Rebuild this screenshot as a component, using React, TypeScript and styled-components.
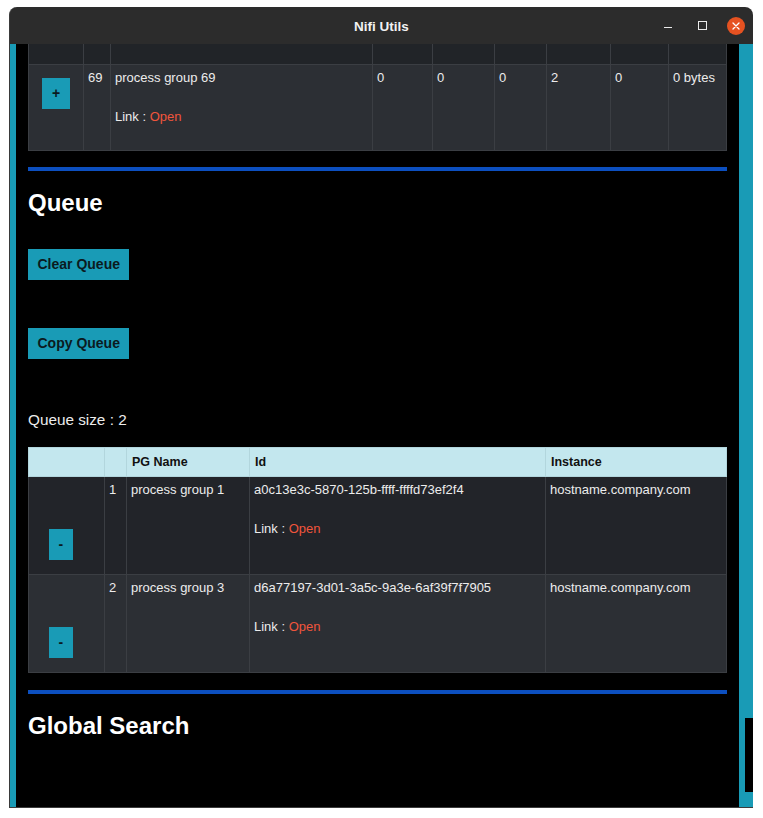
import React from 'react'
import styled, { createGlobalStyle } from 'styled-components'

const teal = '#199bb6'
const textColor = '#ececec'
const border = '#3b3e43'

const GlobalStyle = createGlobalStyle`
  body {
    margin: 0;
    background: #ffffff;
    font-family: 'Liberation Sans', Arial, sans-serif;
  }
`

const Window = styled.div`
  margin: 7px 0 0 9px;
  width: 744px;
  height: 801px;
  border-radius: 8px 8px 0 0;
  overflow: hidden;
  background: #2c2c2c;
  display: flex;
  flex-direction: column;
  box-sizing: border-box;
  border-left: 1px solid #3a3a3a;
  border-bottom: 1px solid #3c3c3c;
`

const TitleBar = styled.div`
  height: 37px;
  flex: none;
  display: grid;
  grid-template-columns: 1fr auto 1fr;
  align-items: center;
  color: #f2f2f2;
  font-weight: bold;
  font-size: 13.5px;
`

const Title = styled.div`
  grid-column: 2;
  padding-top: 1px;
`

const Controls = styled.div`
  justify-self: end;
  display: flex;
  align-items: center;
  gap: 16px;
  padding-right: 8px;
`

const CtrlButton = styled.div`
  width: 18px;
  height: 18px;
  display: flex;
  align-items: center;
  justify-content: center;
`

const MinLine = styled.span`
  width: 8px;
  height: 1.5px;
  background: #eaeaea;
  margin-top: 4px;
`

const MaxBox = styled.span`
  width: 7px;
  height: 7px;
  border: 1px solid #eaeaea;
`

const CloseCircle = styled(CtrlButton)`
  border-radius: 50%;
  background: #e65221;
`

const Body = styled.div`
  flex: 1;
  display: flex;
  min-height: 0;
`

const SideBorder = styled.div`
  width: 6px;
  flex: none;
  background: ${teal};
`

const Main = styled.div`
  flex: 1;
  background: #000;
  padding: 0 12px;
  overflow: hidden;
  color: ${textColor};
`

const ScrollTrack = styled.div`
  width: 14px;
  flex: none;
  background: ${teal};
  display: flex;
  flex-direction: column;
  align-items: flex-end;
`

const ScrollThumb = styled.div`
  width: 8px;
  height: 74px;
  margin-top: 674px;
  background: #000;
`

const Table = styled.table`
  width: 698px;
  border-collapse: collapse;
  table-layout: fixed;
  font-size: 13px;
`

const HeadRow = styled.tr<{ $light?: boolean; $h: number }>`
  height: ${(p) => p.$h}px;
  background: ${(p) => (p.$light ? '#c3e7ee' : '#212428')};
  color: #111;
`

const Th = styled.th`
  border: 1px solid #b2d6dd;
  text-align: left;
  padding: 0 5px;
  font-weight: bold;
  font-size: 12.5px;
`

const DarkTh = styled.th`
  border: 1px solid ${border};
  border-top: none;
`

const Row = styled.tr<{ $dark?: boolean; $h: number }>`
  height: ${(p) => p.$h}px;
  background: ${(p) => (p.$dark ? '#222429' : '#2c2f34')};
`

const Td = styled.td`
  border: 1px solid ${border};
  vertical-align: top;
  padding: 4px 5px 0 4px;
  line-height: 18px;
  word-break: break-all;
`

const ActionCell = styled.td<{ $bottom?: boolean; $left?: number }>`
  border: 1px solid ${border};
  padding: 0;
  vertical-align: ${(p) => (p.$bottom ? 'bottom' : 'top')};
  text-align: ${(p) => (p.$left ? 'left' : 'center')};
  padding-left: ${(p) => p.$left ?? 0}px;
  padding-top: ${(p) => (p.$bottom ? 0 : 13)}px;
  padding-bottom: ${(p) => (p.$bottom ? 14 : 0)}px;
`

const Button = styled.button`
  background: ${teal};
  color: #0b1a20;
  border: none;
  border-radius: 0;
  height: 31px;
  padding: 0 9.5px;
  font-family: 'Liberation Sans', Arial, sans-serif;
  font-weight: bold;
  font-size: 14px;
  cursor: pointer;
  display: block;
`

const LinkLine = styled.p`
  margin: 21px 0 0;
`

const LinkText = styled.a`
  color: #f0553c;
  text-decoration: none;
`

const Divider = styled.div<{ $top: number }>`
  height: 4px;
  margin-top: ${(p) => p.$top}px;
  background: #0c4fbf;
`

const Heading = styled.h2`
  margin: 17px 0 0;
  font-size: 24px;
  line-height: 30px;
  font-weight: bold;
  color: #fff;
`

const Stack = styled.div<{ $top: number }>`
  margin-top: ${(p) => p.$top}px;
`

const QueueSize = styled.div`
  margin-top: 52px;
  font-size: 15.3px;
  line-height: 18px;
`

const TableWrap = styled.div`
  margin-top: 18px;
`

const Link = () => (
  <LinkLine>
    Link : <LinkText href="#">Open</LinkText>
  </LinkLine>
)

const CloseIcon = () => (
  <svg width="8" height="8" viewBox="0 0 8 8">
    <path d="M1 1L7 7M7 1L1 7" stroke="#fff" strokeWidth="1.3" strokeLinecap="round" />
  </svg>
)

const groupCols = [55, 27, 262, 60, 62, 52, 64, 58, 58]
const queueCols = [76, 22, 123, 296, 181]

const queue = [
  { n: 1, name: 'process group 1', id: 'a0c13e3c-5870-125b-ffff-ffffd73ef2f4' },
  { n: 2, name: 'process group 3', id: 'd6a77197-3d01-3a5c-9a3e-6af39f7f7905' },
]

export default function App() {
  return (
    <>
      <GlobalStyle />
      <Window>
        <TitleBar>
          <Title>Nifi Utils</Title>
          <Controls>
            <CtrlButton>
              <MinLine />
            </CtrlButton>
            <CtrlButton>
              <MaxBox />
            </CtrlButton>
            <CloseCircle>
              <CloseIcon />
            </CloseCircle>
          </Controls>
        </TitleBar>
        <Body>
          <SideBorder />
          <Main>
            <Table>
              <colgroup>
                {groupCols.map((w, i) => (
                  <col key={i} style={{ width: w }} />
                ))}
              </colgroup>
              <thead>
                <HeadRow $h={20}>
                  {groupCols.map((_, i) => (
                    <DarkTh key={i} />
                  ))}
                </HeadRow>
              </thead>
              <tbody>
                <Row $h={86}>
                  <ActionCell>
                    <Button style={{ margin: '0 auto' }}>+</Button>
                  </ActionCell>
                  <Td>69</Td>
                  <Td>
                    process group 69
                    <Link />
                  </Td>
                  <Td>0</Td>
                  <Td>0</Td>
                  <Td>0</Td>
                  <Td>2</Td>
                  <Td>0</Td>
                  <Td>0 bytes</Td>
                </Row>
              </tbody>
            </Table>

            <Divider $top={16} />
            <Heading>Queue</Heading>
            <Stack $top={31}>
              <Button>Clear Queue</Button>
            </Stack>
            <Stack $top={48}>
              <Button>Copy Queue</Button>
            </Stack>
            <QueueSize>Queue size : 2</QueueSize>

            <TableWrap>
              <Table>
                <colgroup>
                  {queueCols.map((w, i) => (
                    <col key={i} style={{ width: w }} />
                  ))}
                </colgroup>
                <thead>
                  <HeadRow $light $h={29}>
                    <Th />
                    <Th />
                    <Th>PG Name</Th>
                    <Th>Id</Th>
                    <Th>Instance</Th>
                  </HeadRow>
                </thead>
                <tbody>
                  {queue.map((q, i) => (
                    <Row key={q.n} $dark={i % 2 === 0} $h={98}>
                      <ActionCell $bottom $left={20}>
                        <Button>-</Button>
                      </ActionCell>
                      <Td>{q.n}</Td>
                      <Td>{q.name}</Td>
                      <Td>
                        {q.id}
                        <Link />
                      </Td>
                      <Td>hostname.company.com</Td>
                    </Row>
                  ))}
                </tbody>
              </Table>
            </TableWrap>

            <Divider $top={17} />
            <Heading>Global Search</Heading>
          </Main>
          <ScrollTrack>
            <ScrollThumb />
          </ScrollTrack>
        </Body>
      </Window>
    </>
  )
}
